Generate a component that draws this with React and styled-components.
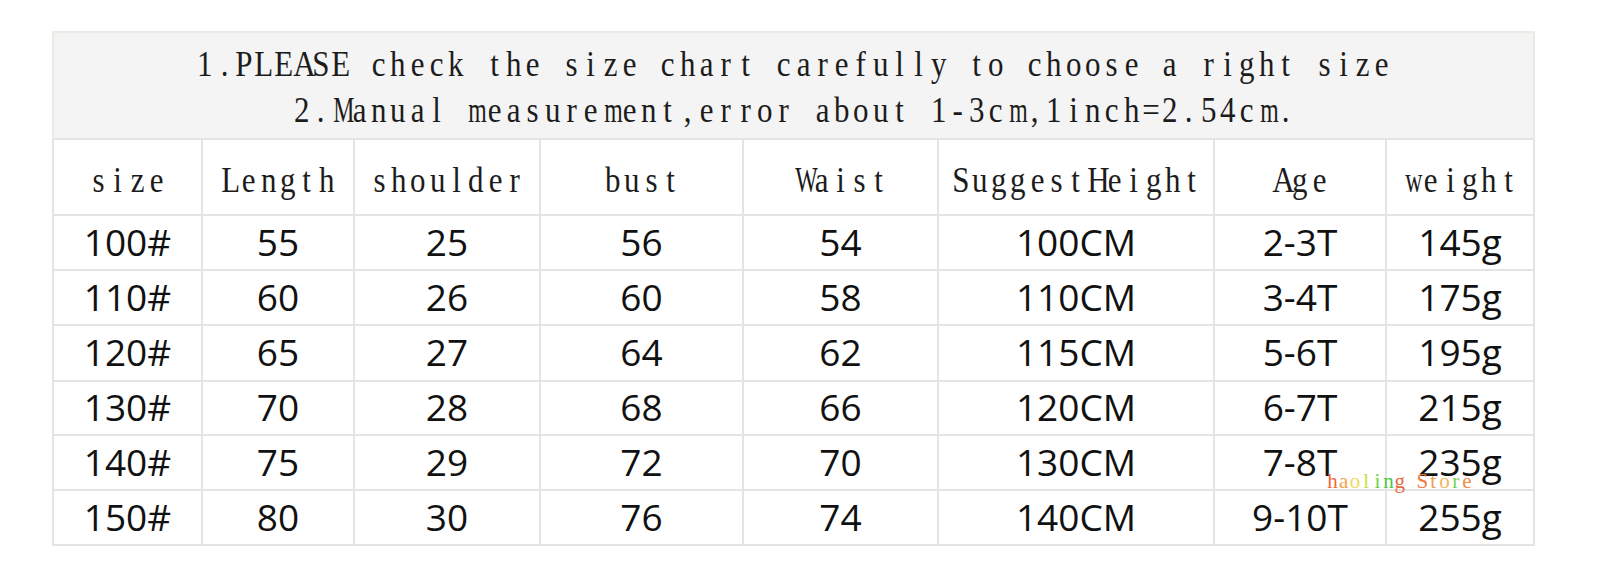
import React from "react";
import styled, { createGlobalStyle } from "styled-components";

const GlobalStyle = createGlobalStyle`
  html, body {
    margin: 0;
    padding: 0;
    background: #ffffff;
  }
  body {
    font-family: "Liberation Serif", serif;
  }
`;

const columns = [
  { label: "size", width: 149 },
  { label: "Length", width: 152 },
  { label: "shoulder", width: 186 },
  { label: "bust", width: 203 },
  { label: "Waist", width: 195 },
  { label: "SuggestHeight", width: 276 },
  { label: "Age", width: 172 },
  { label: "weight", width: 148 },
];

const rows = [
  ["100#", "55", "25", "56", "54", "100CM", "2-3T", "145g"],
  ["110#", "60", "26", "60", "58", "110CM", "3-4T", "175g"],
  ["120#", "65", "27", "64", "62", "115CM", "5-6T", "195g"],
  ["130#", "70", "28", "68", "66", "120CM", "6-7T", "215g"],
  ["140#", "75", "29", "72", "70", "130CM", "7-8T", "235g"],
  ["150#", "80", "30", "76", "74", "140CM", "9-10T", "255g"],
];

const watermarkColors = [
  "#f2683a", "#f3a04a", "#f2d85a", "#c8e04a", "#6fd24a", "#4cc64a", "#e8683c",
  "#ffffff", "#f07a44", "#f29a4c", "#f2b45a", "#7ad050", "#f08a48",
];

// wide glyphs get squeezed harder so they stay inside their half-width cell
const WIDE = "MWmw";

const Page = styled.div`
  position: relative;
  width: 1600px;
  height: 581px;
  padding: 31px 0 0 52px;
  box-sizing: border-box;
`;

const Chart = styled.table`
  width: 1481px;
  border-collapse: collapse;
  table-layout: fixed;
  border: 2px solid #eaebe2;
`;

const NoteCell = styled.td`
  height: 107px;
  background: #f4f4f4;
  border-bottom: 2px solid #e4e4e4;
  text-align: center;
  vertical-align: middle;
  padding: 2px 0 0;
  box-sizing: border-box;
`;

const NoteLine = styled.div`
  font-size: 36px;
  line-height: 46px;
  color: #1c1c1c;
  white-space: nowrap;
`;

/* each glyph sits in a fixed half-width cell, like the bitmap CJK font in the chart */
const Cell = styled.span`
  display: inline-block;
  width: ${(p) => p.$w}px;
  text-align: center;
  transform: scaleX(${(p) => p.$sx || 0.86});
  font-family: "Liberation Serif", serif;
  white-space: pre;
`;

const MonoText = ({ text, cell = 19.3 }) => (
  <>
    {Array.from(text).map((ch, i) => (
      <Cell key={i} $w={cell} $sx={WIDE.includes(ch) ? 0.66 : 0.86}>
        {ch}
      </Cell>
    ))}
  </>
);

const HeadCell = styled.th`
  height: 76px;
  padding: 6px 0 0;
  box-sizing: border-box;
  font-weight: normal;
  font-size: 36px;
  line-height: 44px;
  color: #1c1c1c;
  text-align: center;
  border: 2px solid #e4e4e4;
  white-space: nowrap;
  overflow: hidden;
`;

const DataCell = styled.td`
  height: ${(p) => p.$h}px;
  padding: 0 0 2px;
  box-sizing: border-box;
  font-family: "Open Sans", "Noto Sans", sans-serif;
  font-size: 37px;
  line-height: 44px;
  color: #111111;
  text-align: center;
  border: 2px solid #e4e4e4;
`;

const Watermark = styled.div`
  position: absolute;
  left: 1327px;
  top: 469px;
  font-size: 21px;
  line-height: 24px;
  white-space: nowrap;
`;

const rowHeights = [55, 55, 56, 54, 55, 55];

export default function App() {
  return (
    <>
      <GlobalStyle />
      <Page>
        <Chart>
          <colgroup>
            {columns.map((c) => (
              <col key={c.label} style={{ width: c.width }} />
            ))}
          </colgroup>
          <thead>
            <tr>
              <NoteCell colSpan={8}>
                <NoteLine>
                  <MonoText text="1.PLEASE check the size chart carefully to choose a right size" />
                </NoteLine>
                <NoteLine>
                  <MonoText text="2.Manual measurement,error about 1-3cm,1inch=2.54cm." />
                </NoteLine>
              </NoteCell>
            </tr>
            <tr>
              {columns.map((c) => (
                <HeadCell key={c.label}>
                  <MonoText text={c.label} />
                </HeadCell>
              ))}
            </tr>
          </thead>
          <tbody>
            {rows.map((r, i) => (
              <tr key={r[0]}>
                {r.map((v, j) => (
                  <DataCell key={j} $h={rowHeights[i]}>
                    {v}
                  </DataCell>
                ))}
              </tr>
            ))}
          </tbody>
        </Chart>
        <Watermark>
          {Array.from("haoling Store").map((ch, i) => (
            <Cell key={i} $w={11.2} $sx={1} style={{ color: watermarkColors[i] }}>
              {ch}
            </Cell>
          ))}
        </Watermark>
      </Page>
    </>
  );
}
